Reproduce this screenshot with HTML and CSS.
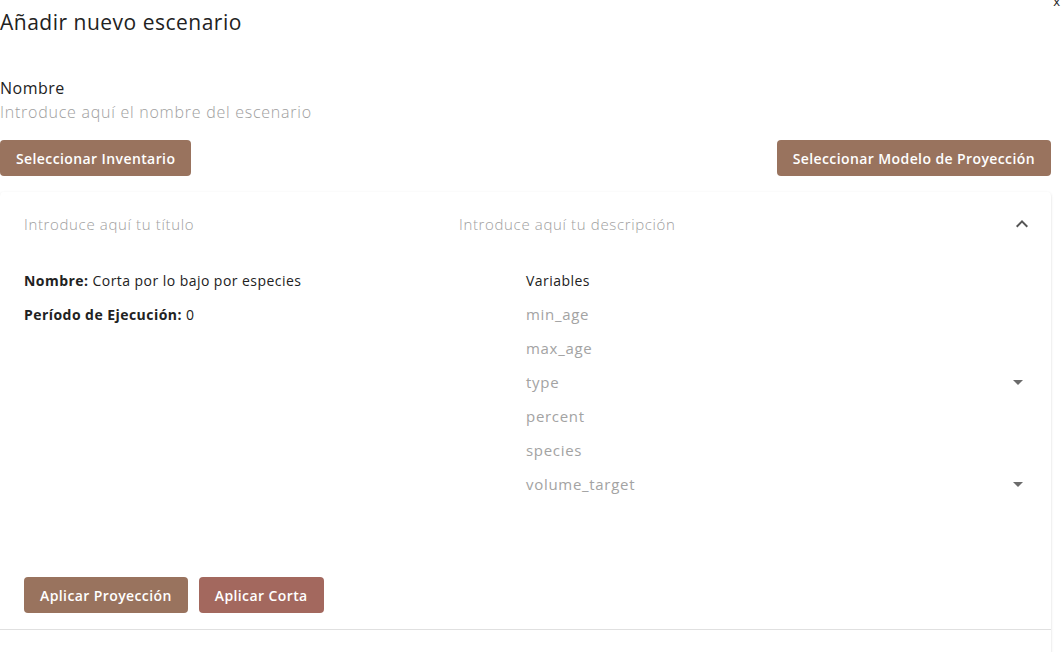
FILE: index.html
```html
<!DOCTYPE html>
<html lang="es">
  <head>
    <meta charset="UTF-8" />
    <meta name="viewport" content="width=device-width, initial-scale=1.0" />
    <title>Añadir nuevo escenario</title>
    <link rel="stylesheet" href="styles.css">
  </head>
  <body>
    <div class="modal">
      <button class="close" type="button">x</button>
      <h2 class="title">Añadir nuevo escenario</h2>

      <div class="field">
        <label for="nombre">Nombre</label>
        <input id="nombre" placeholder="Introduce aquí el nombre del escenario" />
      </div>

      <div class="actions">
        <button class="btn" type="button">Seleccionar Inventario</button>
        <button class="btn" type="button">Seleccionar Modelo de Proyección</button>
      </div>

      <div class="card">
        <div class="card-header">
          <input class="head-input" placeholder="Introduce aquí tu título" />
          <input class="head-input" placeholder="Introduce aquí tu descripción" />
          <svg class="chevron" width="24" height="24" viewBox="0 0 24 24">
            <path d="M12 8l-6 6 1.41 1.41L12 10.83l4.59 4.58L18 14z" fill="#555" />
          </svg>
        </div>

        <div class="card-body">
          <div class="info">
            <p><b>Nombre:</b> Corta por lo bajo por especies</p>
            <p><b>Período de Ejecución:</b> 0</p>
          </div>
          <div class="vars">
            <p class="vars-title">Variables</p>
            <div class="var">min_age</div>
            <div class="var">max_age</div>
            <div class="var select">type <span class="caret"></span></div>
            <div class="var">percent</div>
            <div class="var">species</div>
            <div class="var select">volume_target <span class="caret"></span></div>
          </div>
        </div>

        <div class="card-footer">
          <button class="btn" type="button">Aplicar Proyección</button>
          <button class="btn btn-red" type="button">Aplicar Corta</button>
        </div>
        <div class="card-rest"></div>
      </div>
    </div>
  </body>
</html>
```

FILE: styles.css
```css
body {
  margin: 0;
  font-family: "Open Sans", Arial, sans-serif;
  color: #222;
  background-color: white;
  overflow: hidden;
}
.modal {
  position: relative;
  width: 1051px;
}
.close {
  position: absolute;
  top: -5px;
  right: -9px;
  border: none;
  background: none;
  padding: 0;
  font-family: inherit;
  font-size: 13px;
  line-height: 13px;
  color: #222;
}
.title {
  margin: 0;
  padding-top: 8px;
  font-size: 21px;
  font-weight: 500;
  line-height: 28px;
  letter-spacing: 0.5px;
  color: #222;
}
.field {
  margin-top: 40px;
}
label {
  display: block;
  font-size: 16px;
  line-height: 24px;
  letter-spacing: 0.5px;
  color: #222;
}
input {
  display: block;
  width: 100%;
  border: none;
  outline: none;
  padding: 0;
  font-family: inherit;
  font-size: 16px;
  line-height: 24px;
  letter-spacing: 0.75px;
  background: none;
}
input::placeholder {
  color: #9e9e9e;
  font-weight: 300;
}
.actions {
  display: flex;
  justify-content: space-between;
  margin-top: 16px;
}
.btn {
  height: 36px;
  padding: 0 16px;
  border: none;
  border-radius: 4px;
  background-color: #99735e;
  color: white;
  font-family: inherit;
  font-size: 14px;
  font-weight: 600;
  letter-spacing: 0.4px;
  cursor: pointer;
}
.btn-red {
  background-color: #a3685e;
}
.card {
  margin-top: 16px;
  border-radius: 4px;
  box-shadow: 0 2px 1px -1px rgba(0, 0, 0, 0.2), 0 1px 1px 0 rgba(0, 0, 0, 0.14), 0 1px 3px 0 rgba(0, 0, 0, 0.12);
}
.card-header {
  display: flex;
  align-items: center;
  height: 64px;
  padding: 0 17px 0 24px;
}
.head-input {
  width: 435px;
  font-size: 15px;
  letter-spacing: 0.65px;
}
.head-input + .head-input {
  flex: 1;
}
.chevron {
  margin-top: -1px;
}
.card-body {
  display: flex;
  padding: 15px 24px 0;
}
.info {
  width: 502px;
}
.info p,
.vars-title {
  margin: 0 0 14px;
  font-size: 14px;
  line-height: 20px;
  letter-spacing: 0.45px;
}
.vars-title {
  margin-bottom: 13px;
}
.vars {
  flex: 1;
  padding-right: 4px;
}
.var {
  display: flex;
  justify-content: space-between;
  align-items: center;
  height: 20px;
  margin-bottom: 14px;
  font-size: 15px;
  letter-spacing: 0.7px;
  color: #a3a3a3;
}
.caret {
  width: 0;
  height: 0;
  border-left: 5px solid transparent;
  border-right: 5px solid transparent;
  border-top: 5px solid #6b6b6b;
}
.card-footer {
  display: flex;
  gap: 11px;
  padding: 69px 24px 16px;
  border-bottom: 1px solid #e0e0e0;
}
.card-rest {
  height: 30px;
}
```
